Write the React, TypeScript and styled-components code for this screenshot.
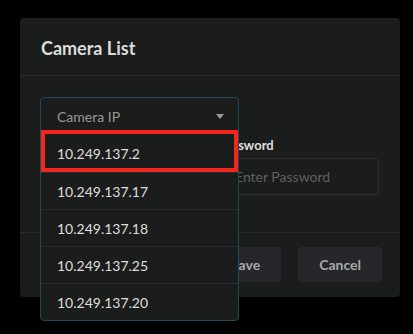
import React from "react";
import styled, { createGlobalStyle } from "styled-components";

const GlobalStyle = createGlobalStyle`
  html, body {
    margin: 0;
    padding: 0;
    background: #000;
    font-family: Lato, "Noto Sans", sans-serif;
  }
`;

const Screen = styled.div`
  width: 413px;
  height: 334px;
  padding: 18px 0 0 20px;
  box-sizing: border-box;
  overflow: hidden;
`;

const Modal = styled.div`
  width: 380px;
  background: #1b1c1c;
  border-radius: 4px;
`;

const ModalHeader = styled.div`
  height: 58px;
  padding: 0 21px;
  display: flex;
  align-items: center;
  border-bottom: 1px solid #2a2b2c;
  box-sizing: border-box;
`;

const Title = styled.h2`
  margin: 0;
  font-size: 18px;
  font-weight: 700;
  color: #dcdcdc;
  line-height: 22px;
  padding-top: 2px;
`;

const ModalBody = styled.div`
  position: relative;
  padding: 22px 21px 37px;
  display: grid;
  grid-template-columns: minmax(0, 1fr) minmax(0, 1fr);
  column-gap: 16px;
`;

const Field = styled.div<{ $offset?: number }>`
  display: flex;
  flex-direction: column;
  min-width: 0;
  padding-top: ${(p) => p.$offset ?? 0}px;
`;

const Label = styled.label`
  font-size: 13px;
  font-weight: 700;
  color: #dedede;
  line-height: 16px;
  margin-bottom: 5px;
`;

const Input = styled.input`
  width: 100%;
  height: 37px;
  box-sizing: border-box;
  background: transparent;
  border: 1px solid #2c2e30;
  border-radius: 4px;
  padding: 0 16px;
  font-family: Lato, sans-serif;
  font-size: 14px;
  color: #ddd;
  outline: none;
  &::placeholder {
    color: #5f6062;
  }
`;

const Trigger = styled.div<{ $open?: boolean }>`
  height: 37px;
  box-sizing: border-box;
  display: flex;
  align-items: center;
  justify-content: space-between;
  padding: 0 14px 0 16px;
  font-size: 14px;
  color: #9b9893;
  border: ${(p) => (p.$open ? "none" : "1px solid #2c2e30")};
  border-radius: 4px;
`;

const Caret = styled.span`
  width: 0;
  height: 0;
  border-left: 4px solid transparent;
  border-right: 4px solid transparent;
  border-top: 5px solid #9a9a9a;
`;

const Dropdown = styled.div`
  position: absolute;
  top: 21px;
  left: 20px;
  width: 197px;
  background: #1b1c1c;
  border: 1px solid #1e4b5c;
  border-radius: 4px;
  z-index: 2;
`;

const Option = styled.div`
  height: 37px;
  box-sizing: border-box;
  display: flex;
  align-items: center;
  padding-left: 16px;
  font-size: 14px;
  color: #dedede;
  & + & {
    border-top: 1px solid #2a2b2c;
  }
`;

const Highlight = styled.div`
  position: absolute;
  top: 32px;
  left: 0;
  width: 197px;
  height: 42px;
  box-sizing: border-box;
  border: 4px solid #f4271c;
  pointer-events: none;
`;

const ModalFooter = styled.div`
  border-top: 1px solid #2a2b2c;
  padding: 14px 18px 15px;
  display: flex;
  justify-content: flex-end;
  gap: 17px;
`;

const Button = styled.button`
  height: 35px;
  padding: 0 21px;
  border: none;
  border-radius: 4px;
  background: #25272a;
  color: #a9a9a9;
  font-family: Lato, sans-serif;
  font-size: 14px;
  font-weight: 700;
`;

const ips = ["10.249.137.2", "10.249.137.17", "10.249.137.18", "10.249.137.25", "10.249.137.20"];

export default function App() {
  return (
    <>
      <GlobalStyle />
      <Screen>
        <Modal>
          <ModalHeader>
            <Title>Camera List</Title>
          </ModalHeader>
          <ModalBody>
            <Field>
              <Trigger>
                Camera IP
                <Caret />
              </Trigger>
            </Field>
            <Field $offset={39}>
              <Label>Password</Label>
              <Input placeholder="Enter Password" type="password" />
            </Field>
            <Dropdown>
              <Trigger $open>
                Camera IP
                <Caret />
              </Trigger>
              {ips.map((ip) => (
                <Option key={ip}>{ip}</Option>
              ))}
              <Highlight />
            </Dropdown>
          </ModalBody>
          <ModalFooter>
            <Button>Save</Button>
            <Button>Cancel</Button>
          </ModalFooter>
        </Modal>
      </Screen>
    </>
  );
}
